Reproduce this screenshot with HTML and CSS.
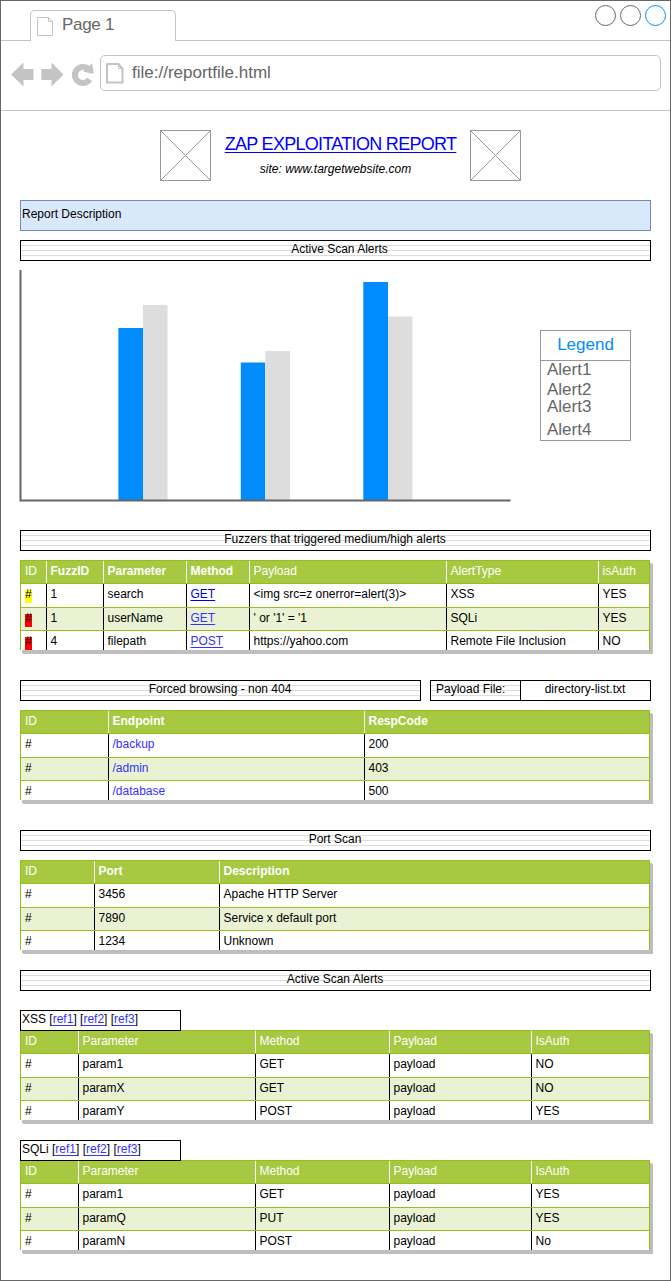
FILE: index.html
```html
<!DOCTYPE html>
<html lang="en">
<head>
<meta charset="utf-8">
<title>ZAP Exploitation Report</title>
<link rel="stylesheet" href="styles.css">
</head>
<body>
<div class="window">
  <header class="tabstrip">
    <div class="tab">
      <svg class="tab-icon" width="16" height="19" viewBox="0 0 16 19"><path d="M.5.5h11l4 4v14H.5zM11.5.5v4h4" fill="none" stroke="#c4c4c4"/></svg>
      <span>Page 1</span>
    </div>
    <div class="controls"><i class="dot"></i><i class="dot"></i><i class="dot dot-active"></i></div>
  </header>
  <div class="toolbar">
    <svg class="nav" width="84" height="26" viewBox="11 62 84 26">
      <path d="M11 74.5L23.5 62.5V69H33.5V80H23.5V86.5Z" fill="#c4c4c4"/>
      <path d="M63.5 74.5L51.5 62.5V69H41.3V80H51.5V86.5Z" fill="#c4c4c4"/>
      <path d="M89.6 79.4A8 8 0 1 1 88.6 69.4" fill="none" stroke="#c4c4c4" stroke-width="6"/>
      <path d="M92.2 63.3L93.6 73.8L83.2 71.8Z" fill="#c4c4c4"/>
    </svg>
    <div class="address">
      <svg width="18" height="21" viewBox="0 0 18 21"><path d="M1 1h11.5l4 4.5v14H1z" fill="none" stroke="#c4c4c4" stroke-width="2"/><path d="M12.5 1v4.5h4" fill="none" stroke="#c4c4c4"/></svg>
      <span>file://reportfile.html</span>
    </div>
  </div>

  <main class="page">
    <div class="masthead">
      <svg width="51" height="51" viewBox="0 0 51 51"><path d="M.5.5h50v50H.5zL50.5 50.5M50.5.5L.5 50.5" fill="none" stroke="#999"/></svg>
      <div class="headline">
        <a class="title">ZAP EXPLOITATION REPORT</a>
        <p class="site">site: www.targetwebsite.com</p>
      </div>
      <svg width="51" height="51" viewBox="0 0 51 51"><path d="M.5.5h50v50H.5zL50.5 50.5M50.5.5L.5 50.5" fill="none" stroke="#999"/></svg>
    </div>

    <div class="description">Report Description</div>
    <h2 class="bar scan-bar">Active Scan Alerts</h2>

    <div class="overview">
      <svg class="chart" width="492" height="233" viewBox="19 270 492 233">
        <path d="M118.4 328H143V500H118.4zM240.8 362.5H265.3V500H240.8zM363.3 282H388V500H363.3z" fill="#008cff"/>
        <path d="M143 305H167.5V500H143zM265.3 351H290V500H265.3zM388 316.6H412.5V500H388z" fill="#ddd"/>
        <path d="M20.5 270V500.5H510.5" fill="none" stroke="#666" stroke-width="2"/>
      </svg>
      <div class="legend">
        <div class="legend-title">Legend</div>
        <ul class="legend-list"><li>Alert1</li><li>Alert2</li><li>Alert3</li><li>Alert4</li></ul>
      </div>
    </div>

    <h2 class="bar fuzz-bar">Fuzzers that triggered medium/high alerts</h2>
    <div class="table fuzz">
      <div class="row head"><span>ID</span><b>FuzzID</b><b>Parameter</b><b>Method</b><span>Payload</span><span>AlertType</span><span>isAuth</span></div>
      <div class="row"><span><mark class="medium">#</mark></span><span>1</span><span>search</span><span><a class="link strong">GET</a></span><span>&lt;img src=z onerror=alert(3)&gt;</span><span>XSS</span><span>YES</span></div>
      <div class="row"><span><mark class="high">#</mark></span><span>1</span><span>userName</span><span><a class="link">GET</a></span><span>' or '1' = '1</span><span>SQLi</span><span>YES</span></div>
      <div class="row"><span><mark class="high">#</mark></span><span>4</span><span>filepath</span><span><a class="link">POST</a></span><span>https://yahoo.com</span><span>Remote File Inclusion</span><span>NO</span></div>
    </div>

    <div class="browse-bars">
      <h2 class="bar">Forced browsing - non 404</h2>
      <div class="file"><div class="bar file-label">Payload File:</div><div class="file-name">directory-list.txt</div></div>
    </div>
    <div class="table browse">
      <div class="row head"><span>ID</span><b>Endpoint</b><b>RespCode</b></div>
      <div class="row"><span>#</span><span class="path">/backup</span><span>200</span></div>
      <div class="row"><span>#</span><span class="path">/admin</span><span>403</span></div>
      <div class="row"><span>#</span><span class="path">/database</span><span>500</span></div>
    </div>

    <h2 class="bar port-bar">Port Scan</h2>
    <div class="table ports">
      <div class="row head"><span>ID</span><b>Port</b><b>Description</b></div>
      <div class="row"><span>#</span><span>3456</span><span>Apache HTTP Server</span></div>
      <div class="row"><span>#</span><span>7890</span><span>Service x default port</span></div>
      <div class="row"><span>#</span><span>1234</span><span>Unknown</span></div>
    </div>

    <h2 class="bar alerts-bar">Active Scan Alerts</h2>
    <div class="refs">XSS [<a class="link">ref1</a>] [<a class="link">ref2</a>] [<a class="link">ref3</a>]</div>
    <div class="table alerts">
      <div class="row head"><span>ID</span><span>Parameter</span><span>Method</span><span>Payload</span><span>IsAuth</span></div>
      <div class="row"><span>#</span><span>param1</span><span>GET</span><span>payload</span><span>NO</span></div>
      <div class="row"><span>#</span><span>paramX</span><span>GET</span><span>payload</span><span>NO</span></div>
      <div class="row"><span>#</span><span>paramY</span><span>POST</span><span>payload</span><span>YES</span></div>
    </div>
    <div class="refs">SQLi [<a class="link">ref1</a>] [<a class="link">ref2</a>] [<a class="link">ref3</a>]</div>
    <div class="table alerts">
      <div class="row head"><span>ID</span><span>Parameter</span><span>Method</span><span>Payload</span><span>IsAuth</span></div>
      <div class="row"><span>#</span><span>param1</span><span>GET</span><span>payload</span><span>YES</span></div>
      <div class="row"><span>#</span><span>paramQ</span><span>PUT</span><span>payload</span><span>YES</span></div>
      <div class="row"><span>#</span><span>paramN</span><span>POST</span><span>payload</span><span>No</span></div>
    </div>
  </main>
</div>
</body>
</html>
```
FILE: styles.css
```css
* { box-sizing: border-box; margin: 0; padding: 0; }
body { font: 12px/14px "Liberation Sans", Arial, sans-serif; color: #000; background: #fff; }
svg { display: block; flex: none; }
.window { width: 671px; height: 1281px; border: 1px solid #666; overflow: hidden; }

.tabstrip { height: 40px; border-bottom: 1px solid #c4c4c4; display: flex; justify-content: space-between; padding-left: 29px; }
.tab { width: 146px; height: 31px; margin-top: 9px; border: 1px solid #c4c4c4; border-bottom: 0; border-radius: 5px 5px 0 0; background: #fff; display: flex; padding: 4px 0 0 6px; font-size: 17px; line-height: 20px; letter-spacing: -.3px; color: #666; }
.tab-icon { margin-top: 2px; margin-right: 9px; }
.controls { display: flex; gap: 4px; padding: 4px 4px 0 0; }
.dot { width: 21px; height: 21px; border: 1px solid #666; border-radius: 50%; }
.dot-active { border-color: #008cff; }

.toolbar { height: 70px; border-bottom: 1px solid #c4c4c4; display: flex; padding: 14px 9px 0 10px; }
.nav { margin-top: 7px; }
.address { flex: 1; height: 36px; margin-left: 5px; border: 1px solid #c4c4c4; border-radius: 5px; display: flex; padding: 7px 0 0 5px; font-size: 17px; line-height: 20px; color: #666; gap: 8px; }

.page { padding: 19px 19px 0; }
.masthead { display: flex; justify-content: space-between; width: 361px; height: 51px; margin-left: 140px; }
.headline { text-align: center; padding-top: 4px; white-space: nowrap; }
.title { display: block; font-size: 18px; line-height: 20px; letter-spacing: -.7px; color: #00f; text-decoration: underline; text-decoration-thickness: 1px; text-underline-offset: 2px; }
.site { font-style: italic; margin-top: 8px; padding-right: 10px; }

.description { width: 631px; height: 31px; margin-top: 19px; padding: 6px 1px; border: 1px solid #6c8ebf; background: #dae8fc; }
.bar { width: 631px; height: 21px; font: inherit; text-align: center; padding: 1px 1px 0 0; border: 1px solid #000; background: repeating-linear-gradient(to bottom, transparent 0 4px, #ddd 4px 5px) 0 0 / 100% 15px no-repeat; }
.scan-bar { margin-top: 9px; padding: 1px 0 0 8px; }

.overview { display: flex; margin-top: 9px; height: 233px; }
.chart { margin-left: -1px; }
.legend { width: 91px; height: 111px; margin: 60px 0 0 29px; border: 1px solid #999; font-size: 17px; color: #666; }
.legend-title { height: 30px; line-height: 28px; border-bottom: 1px solid #999; color: #008cff; text-align: center; }
.legend-list { list-style: none; padding-left: 6px; line-height: 17px; }
.legend-list li:nth-child(2) { margin-top: 3px; }
.legend-list li:nth-child(4) { margin-top: 6px; }

.table { width: 630px; height: 90px; border: 1px solid #97be1f; border-bottom: 0; background: #fff; box-shadow: 2px 3px #bebebe, 3px 4px #bebebe; margin-top: 9px; }
.row { display: grid; height: 24px; padding-top: 0; border-bottom: 1px solid #97be1f; }
.row > * { border-left: 1px solid #000; padding: 3px 0 0 3.5px; white-space: nowrap; overflow: hidden; }
.row > :first-child { border-left: 0; padding-left: 4px; }
.head { height: 23px; background: #a7c942; color: #fff; }
.head > * { border-color: #fff; }
.row:nth-child(3) { height: 23px; background: #eaf2d3; }
.row:nth-child(4) { height: 19px; border-bottom: 0; }
.fuzz .row { grid-template-columns: 25px 57px 83px 63px 197px 152px 1fr; }
.browse .row { grid-template-columns: 87px 256px 1fr; }
.ports .row { grid-template-columns: 73px 125px 1fr; }
.alerts .row { grid-template-columns: 57px 177px 134px 142px 1fr; }

mark { color: #000; display: inline-block; height: 13px; line-height: 9px; }
.medium { background: #ff0; }
.high { background: #f00; }
.link { color: #33f; text-decoration: underline; text-decoration-thickness: 1px; text-underline-offset: 2px; }
.strong { color: #00e; }
.path { color: #33f; }

.fuzz-bar { margin-top: 27px; }
.browse-bars { display: flex; gap: 9px; margin-top: 30px; }
.browse-bars > .bar { width: 401px; }
.file { display: flex; width: 221px; }
.file .file-label { width: 91px; text-align: left; padding-left: 5px; }
.file-name { flex: 1; border: 1px solid #000; border-left: 0; text-align: center; padding: 1px 1px 0 0; }
.port-bar { margin-top: 30px; }
.alerts-bar { margin-top: 20px; margin-bottom: 19px; }
.refs { position: relative; z-index: 1; width: 161px; height: 21px; padding: 1px; border: 1px solid #000; }
.refs + .table { margin-top: -1px; }
.table + .refs { margin-top: 20px; }
```
